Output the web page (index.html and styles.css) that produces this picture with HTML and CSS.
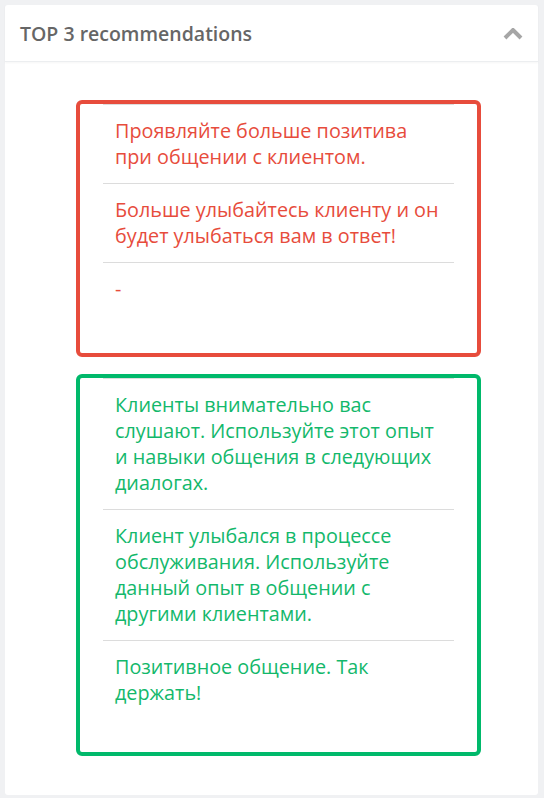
FILE: index.html
```html
<!DOCTYPE html>
<html lang="ru">
<head>
    <meta charset="UTF-8">
    <title>TOP 3 recommendations</title>
    <link rel="stylesheet" href="styles.css">
</head>
<body>
    <div class="card">
        <div class="card-header">
            <span class="card-title">TOP 3 recommendations</span>
            <svg class="toggle" width="20" height="12" viewBox="0 0 20 12">
                <path d="M2 10 L10 2 L18 10" fill="none" stroke="#a6a6a6" stroke-width="4"/>
            </svg>
        </div>
        <div class="card-body">
            <div class="rec-box bad">
                <ul class="rec-list">
                    <li>Проявляйте больше позитива при общении с клиентом.</li>
                    <li>Больше улыбайтесь клиенту и он будет улыбаться вам в ответ!</li>
                    <li>-</li>
                </ul>
            </div>
            <div class="rec-box good">
                <ul class="rec-list">
                    <li>Клиенты внимательно вас слушают. Используйте этот опыт и навыки общения в следующих диалогах.</li>
                    <li>Клиент улыбался в процессе обслуживания. Используйте данный опыт в общении с другими клиентами.</li>
                    <li>Позитивное общение. Так держать!</li>
                </ul>
            </div>
        </div>
    </div>
</body>
</html>
```

FILE: styles.css
```css
body {
    margin: 0;
    padding: 5px 6px 5px 5px;
    background-color: #f0f1f3;
    font-family: "Open Sans", sans-serif;
}

.card {
    background-color: white;
    border-radius: 3px;
}

.card-header {
    display: flex;
    align-items: center;
    justify-content: space-between;
    height: 56px;
    padding: 0 15px;
    border-bottom: 1px solid #eceef0;
    box-shadow: 0 1px 2px rgba(0, 0, 0, 0.04);
}

.card-title {
    font-size: 19.5px;
    font-weight: 600;
    color: #666;
    margin-top: 1px;
}

.toggle {
    margin-top: 2px;
}

.card-body {
    padding: 38px 57px 39px 71px;
}

.rec-box {
    border: 4px solid;
    border-radius: 6px;
    padding: 0 23px 38px;
}

.rec-box + .rec-box {
    margin-top: 17px;
}

.rec-box.bad {
    border-color: #e74c3c;
    color: #e74c3c;
}

.rec-box.good {
    border-color: #00b96b;
    color: #13b86b;
    padding-bottom: 33px;
}

.rec-list {
    list-style: none;
    margin: 0;
    padding: 0;
}

.rec-list li {
    border-top: 1px solid #dcdcdc;
    padding: 13px 10px 13px 12px;
    font-size: 19.8px;
    line-height: 26px;
}
```
